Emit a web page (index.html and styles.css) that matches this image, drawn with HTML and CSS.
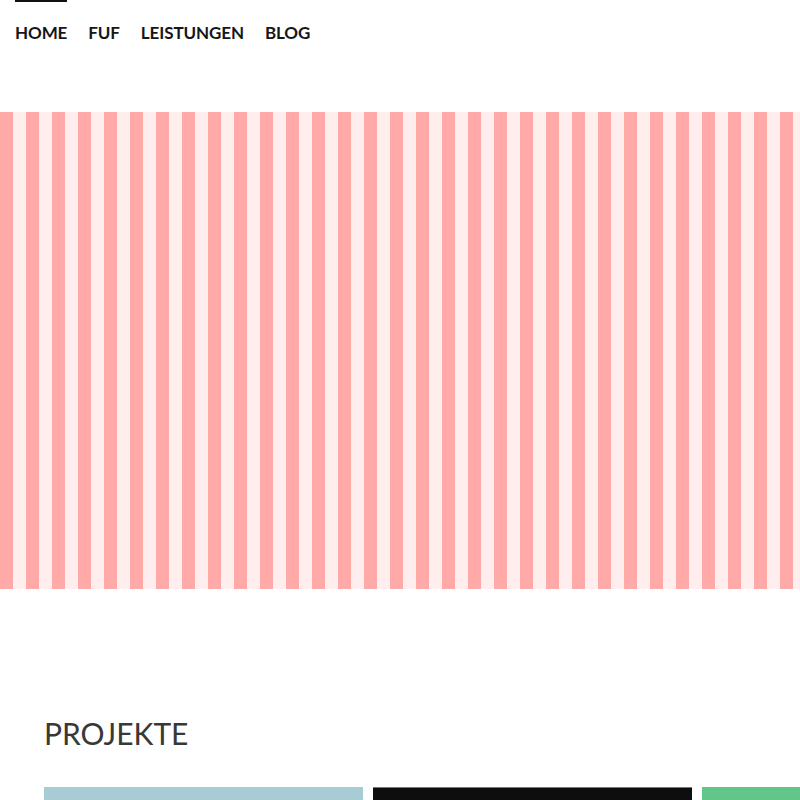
FILE: index.html
```html
<!DOCTYPE html>
<html lang="de">
<head>
<meta charset="utf-8">
<title>Projekte</title>
<link rel="stylesheet" href="styles.css">
</head>
<body>
<header class="site-header">
  <nav class="main-nav">
    <a class="nav-link active" href="#">HOME</a>
    <a class="nav-link" href="#">FUF</a>
    <a class="nav-link" href="#">LEISTUNGEN</a>
    <a class="nav-link" href="#">BLOG</a>
  </nav>
</header>
<section class="hero"></section>
<section class="projects">
  <h2 class="projects-title">PROJEKTE</h2>
  <div class="project-grid">
    <div class="project-card card-blue"></div>
    <div class="project-card card-black"></div>
    <div class="project-card card-green"></div>
  </div>
</section>
</body>
</html>
```

FILE: styles.css
```css
html, body {
  margin: 0;
  padding: 0;
  background: #ffffff;
  overflow: hidden;
}
body {
  font-family: Lato, "Open Sans", sans-serif;
  width: 800px;
}
.site-header {
  padding: 0 15px;
  height: 112px;
}
.main-nav {
  display: flex;
  gap: 21px;
}
.nav-link {
  display: block;
  color: #161616;
  text-decoration: none;
  font-weight: 700;
  font-size: 17px;
  line-height: 20px;
  padding-top: 21px;
  border-top: 2px solid transparent;
  letter-spacing: -0.1px;
}
.nav-link.active {
  border-top-color: #111111;
}
.hero {
  height: 477px;
  background: repeating-linear-gradient(
    to right,
    #ffaaa9 0,
    #ffaaa9 13px,
    #ffeeed 13px,
    #ffeeed 26px
  );
}
.projects {
  padding: 126px 0 0 44px;
}
.projects-title {
  margin: 0;
  font-weight: 400;
  font-size: 30px;
  line-height: 36px;
  color: #383838;
}
.project-grid {
  display: flex;
  gap: 10px;
  margin-top: 36px;
}
.project-card {
  flex: 0 0 319px;
  height: 200px;
}
.card-blue { background: #a8ccd5; }
.card-black { background: #0e0e0e; border-top: 1px solid #777; }
.card-green { background: #62c68a; }
```
